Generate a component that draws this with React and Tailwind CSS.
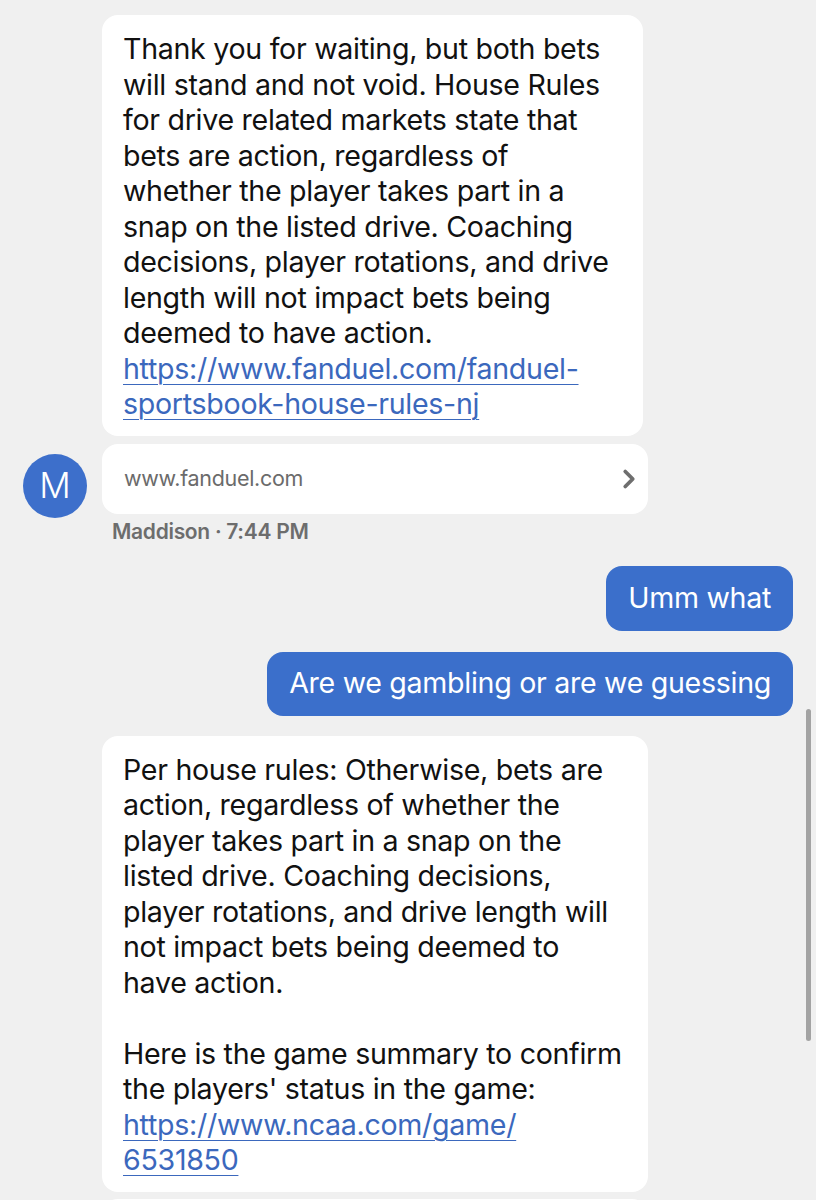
import { ChevronRight } from 'lucide-react'

const FONT = { fontFamily: 'Inter, "Noto Sans", "Liberation Sans", sans-serif' }

const FIRST = [
  'Thank you for waiting, but both bets',
  'will stand and not void. House Rules',
  'for drive related markets state that',
  'bets are action, regardless of',
  'whether the player takes part in a',
  'snap on the listed drive. Coaching',
  'decisions, player rotations, and drive',
  'length will not impact bets being',
  'deemed to have action.',
]

const SECOND = [
  'Per house rules: Otherwise, bets are',
  'action, regardless of whether the',
  'player takes part in a snap on the',
  'listed drive. Coaching decisions,',
  'player rotations, and drive length will',
  'not impact bets being deemed to',
  'have action.',
  '',
  'Here is the game summary to confirm',
  "the players' status in the game:",
]

function Lines({ lines }) {
  return lines.map((l, i) => (
    <div key={i} className="whitespace-nowrap h-[35.5px]">{l || '\u00a0'}</div>
  ))
}

function Link({ lines }) {
  return lines.map((l, i) => (
    <div key={i} className="whitespace-nowrap h-[35.5px]">
      <span className="text-[#3b68bd] underline decoration-1 underline-offset-[5px]">{l}</span>
    </div>
  ))
}

export default function App() {
  return (
    <div className="w-[816px] h-[1200px] bg-[#f0f0f0] overflow-hidden relative text-[#111]" style={FONT}>
      <div className="pt-[15px] pl-[102px]">
        <div className="w-[541px] bg-white rounded-[16px] pl-[21px] pt-[16px] pb-[14px] text-[28.6px] leading-[35.5px] tracking-[-0.3px]">
          <Lines lines={FIRST} />
          <Link lines={['https://www.fanduel.com/fanduel-', 'sportsbook-house-rules-nj']} />
        </div>
      </div>

      <div className="flex items-start mt-[8px]">
        <div className="w-[102px] flex justify-center pt-[10px] pl-[8px]">
          <div className="w-[64px] h-[64px] rounded-full bg-[#3d6fcb] text-white flex items-center justify-center text-[35px] font-light">
            M
          </div>
        </div>
        <div className="w-[546px] h-[70px] bg-white rounded-[16px] flex items-center justify-between pl-[22px] pr-[4px]">
          <span className="text-[21.5px] text-[#6b6b6b] tracking-[-0.3px]">www.fanduel.com</span>
          <ChevronRight size={30} strokeWidth={3} className="text-[#6e6e6e]" />
        </div>
      </div>

      <div className="pl-[112px] text-[21px] leading-[28px] font-semibold text-[#6d6d6d] tracking-[-0.3px]">
        Maddison · 7:44 PM
      </div>

      <div className="flex flex-col items-end pr-[23px] mt-[20px] gap-[21px]">
        <div className="h-[65px] bg-[#3b6fcb] rounded-[16px] px-[22px] flex items-center text-white text-[28.6px] tracking-[-0.3px]">
          Umm what
        </div>
        <div className="h-[64px] bg-[#3b6fcb] rounded-[16px] px-[22px] flex items-center text-white text-[28.6px] tracking-[-0.3px]">
          Are we gambling or are we guessing
        </div>
      </div>

      <div className="pl-[102px] mt-[20px]">
        <div className="w-[546px] bg-white rounded-[16px] pl-[21px] pt-[16px] pb-[14px] text-[28.6px] leading-[35.5px] tracking-[-0.3px]">
          <Lines lines={SECOND} />
          <Link lines={['https://www.ncaa.com/game/', '6531850']} />
        </div>
      </div>
      <div className="pl-[102px] mt-[7px]">
        <div className="w-[546px] h-[40px] bg-white rounded-[16px]" />
      </div>

      <div className="absolute left-[806px] top-[709px] w-[5px] h-[332px] rounded-full bg-[#a3a3a3]" />
    </div>
  )
}
